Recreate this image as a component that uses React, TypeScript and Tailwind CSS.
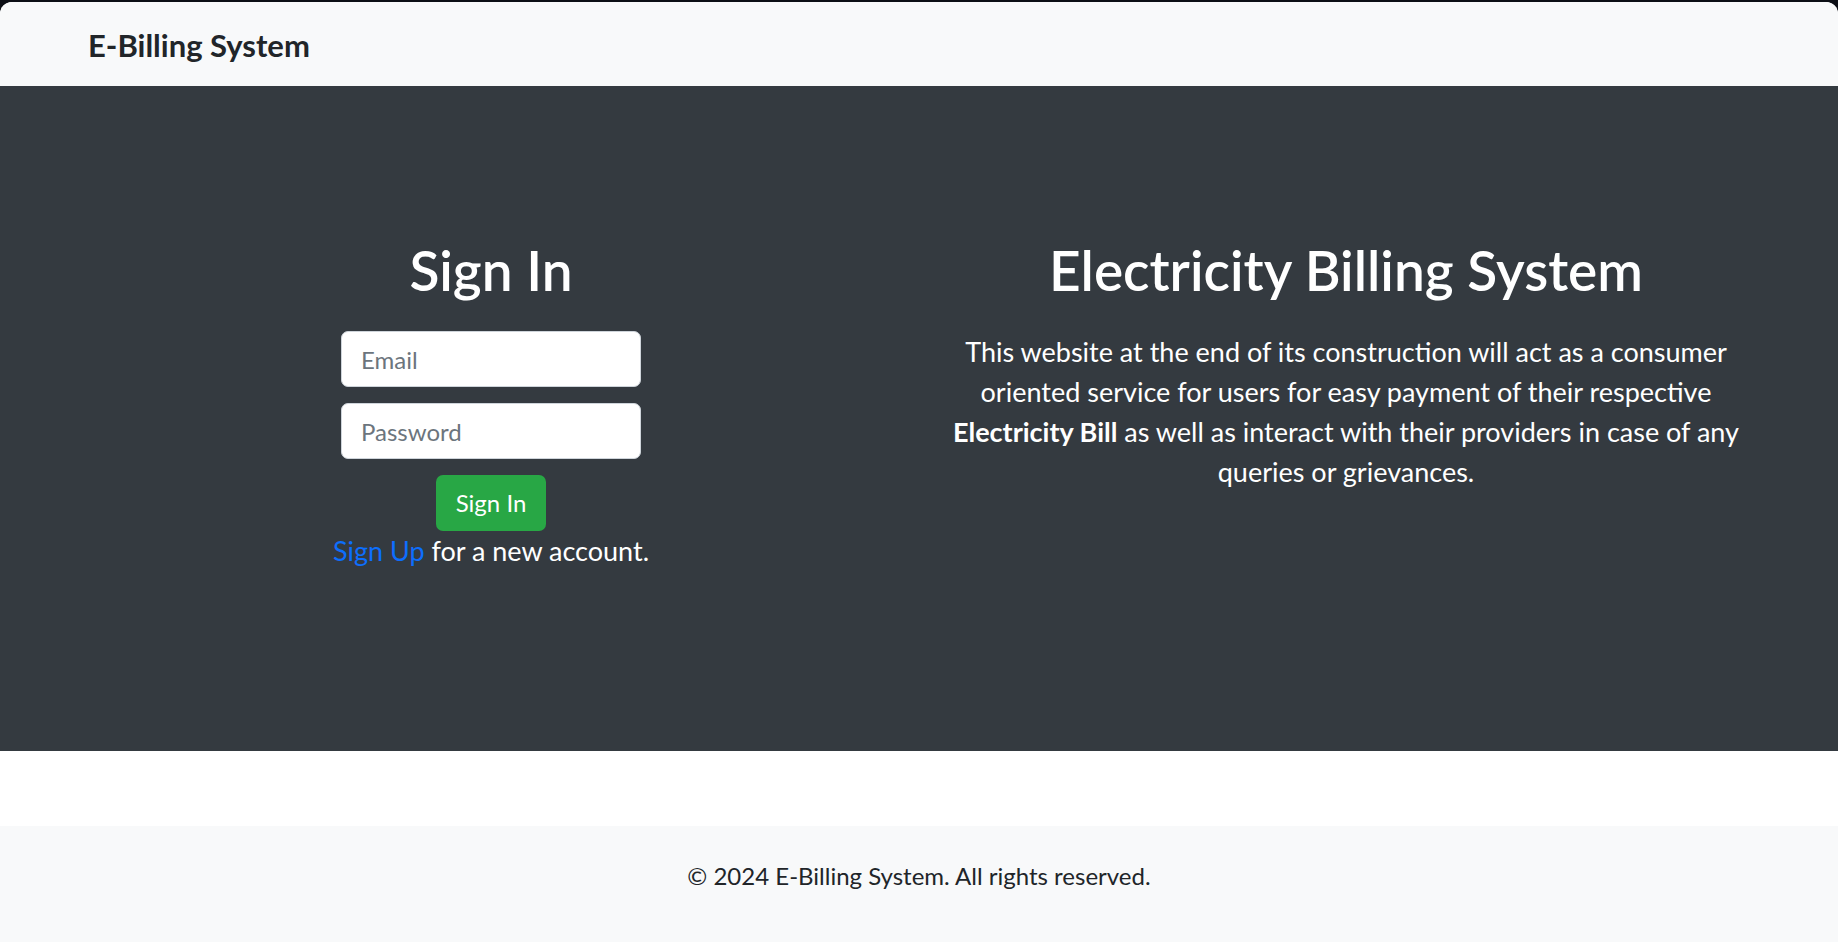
export default function App() {
  return (
    <div className="min-h-screen bg-[#0c0f15] pt-[2px] font-['Lato',sans-serif]">
      <div className="flex h-[940px] flex-col overflow-hidden rounded-t-[12px] bg-white">
        <nav className="flex h-[84px] items-center bg-[#f8f9fa] pl-[88px] pt-[2px]">
          <span className="text-[31px] font-bold leading-[36px] text-[#212529]">E-Billing System</span>
        </nav>
        <section className="flex h-[665px] gap-[32px] bg-[#343a40] pl-[78px] pt-[155px] text-white">
          <div className="flex w-[826px] flex-col items-center">
            <h1 className="text-[55px] font-semibold leading-[59px]">Sign In</h1>
            <input
              type="email"
              placeholder="Email"
              className="mt-[31px] h-[56px] w-[300px] rounded-[7px] border border-[#ced4da] bg-white px-[19px] text-[24px] text-[#212529] outline-none placeholder:text-[#6c757d]"
            />
            <input
              type="password"
              placeholder="Password"
              className="mt-[16px] h-[56px] w-[300px] rounded-[7px] border border-[#ced4da] bg-white px-[19px] text-[24px] text-[#212529] outline-none placeholder:text-[#6c757d]"
            />
            <button className="mt-[16px] h-[56px] w-[110px] rounded-[7px] bg-[#28a745] text-[24px] text-white">
              Sign In
            </button>
            <p className="mt-[3px] text-[27px] leading-[34px]">
              <a href="#" className="text-[#0d6efd]">Sign Up</a> for a new account.
            </p>
          </div>
          <div className="flex w-[820px] flex-col items-center text-center">
            <h1 className="text-[55px] font-semibold leading-[59px]">Electricity Billing System</h1>
            <p className="mt-[32px] text-[27px] leading-[40px]">
              This website at the end of its construction will act as a consumer
              <br />
              oriented service for users for easy payment of their respective
              <br />
              <strong className="font-bold">Electricity Bill</strong> as well as interact with their providers in case of any
              <br />
              queries or grievances.
            </p>
          </div>
        </section>
        <div className="h-[75px] bg-white" />
        <footer className="flex flex-1 justify-center bg-[#f8f9fa] pt-[32px]">
          <p className="text-[24px] leading-[36px] text-[#212529]">© 2024 E-Billing System. All rights reserved.</p>
        </footer>
      </div>
    </div>
  );
}
